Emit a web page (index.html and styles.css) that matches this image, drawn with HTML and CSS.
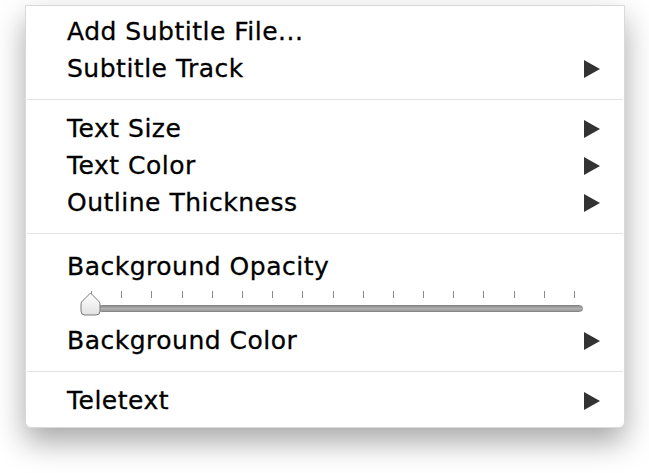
FILE: index.html
```html
<!DOCTYPE html>
<html lang="en">
<head>
    <meta charset="UTF-8">
    <title>Subtitles Menu</title>
    <link rel="stylesheet" href="styles.css">
</head>
<body>

    <div class="menu">
        <div class="menu-item">Add Subtitle File...</div>
        <div class="menu-item">Subtitle Track
            <svg class="arrow" width="16" height="18" viewBox="0 0 16 18"><polygon points="0,0 16,9 0,18" /></svg>
        </div>

        <div class="separator"></div>

        <div class="menu-item">Text Size
            <svg class="arrow" width="16" height="18" viewBox="0 0 16 18"><polygon points="0,0 16,9 0,18" /></svg>
        </div>
        <div class="menu-item">Text Color
            <svg class="arrow" width="16" height="18" viewBox="0 0 16 18"><polygon points="0,0 16,9 0,18" /></svg>
        </div>
        <div class="menu-item">Outline Thickness
            <svg class="arrow" width="16" height="18" viewBox="0 0 16 18"><polygon points="0,0 16,9 0,18" /></svg>
        </div>

        <div class="separator"></div>

        <div class="menu-item opacity-label">Background Opacity</div>
        <div class="slider">
            <div class="ticks" id="ticks"></div>
            <div class="track"></div>
            <svg class="thumb" width="21" height="24" viewBox="0 0 21 24">
                <defs>
                    <linearGradient id="thumb-fill" x1="0" y1="0" x2="0" y2="1">
                        <stop offset="0" stop-color="#ffffff" />
                        <stop offset="1" stop-color="#e2e2e2" />
                    </linearGradient>
                </defs>
                <path d="M10.5 1 L19.5 10 Q20 11 20 13 L20 19 Q20 23 16 23 L5 23 Q1 23 1 19 L1 13 Q1 11 1.5 10 Z"
                      fill="url(#thumb-fill)" stroke="#7a7a7a" stroke-width="1" />
            </svg>
        </div>
        <div class="menu-item">Background Color
            <svg class="arrow" width="16" height="18" viewBox="0 0 16 18"><polygon points="0,0 16,9 0,18" /></svg>
        </div>

        <div class="separator"></div>

        <div class="menu-item">Teletext
            <svg class="arrow" width="16" height="18" viewBox="0 0 16 18"><polygon points="0,0 16,9 0,18" /></svg>
        </div>
    </div>

    <script>
        // slider tick marks
        const ticks = document.getElementById('ticks');
        for (let i = 0; i < 17; i++) {
            const tick = document.createElement('span');
            tick.className = 'tick';
            ticks.appendChild(tick);
        }
    </script>

</body>
</html>
```

FILE: styles.css
```css
/* Basic Styles */
body {
    margin: 0;
    min-height: 473px;
    background-color: #fff;
    font-family: "DejaVu Sans", Verdana, sans-serif;
}

.menu {
    width: 600px;
    height: 423px;
    margin: 5px 0 0 25px;
    padding-top: 7px;
    box-sizing: border-box;
    background-color: #fff;
    border: 1px solid #d9d9d9;
    border-radius: 0 0 6px 6px;
    box-shadow: 0 14px 30px rgba(0, 0, 0, 0.35);
}

.menu-item {
    display: flex;
    align-items: center;
    justify-content: space-between;
    height: 37px;
    line-height: 37px;
    padding: 0 24px 0 41px;
    font-size: 25px;
    letter-spacing: 0.5px;
    color: #000;
    -webkit-text-stroke: 0.3px #000;
}

.arrow {
    fill: #333;
}

.opacity-label {
    padding-top: 4px;
}

.separator {
    height: 1px;
    margin: 12px 1px 10px;
    background-color: #e3e3e3;
}

/* Slider */
.slider {
    position: relative;
    height: 37px;
    margin-left: 54px;
    width: 503px;
}

.ticks {
    display: flex;
    justify-content: space-between;
    margin: 0 8px 0 11px;
    padding-top: 6px;
}

.tick {
    width: 1px;
    height: 7px;
    background-color: #8a8a8a;
}

.track {
    margin: 7px 0 0 18px;
    height: 5px;
    border: 1px solid #858585;
    border-radius: 4px;
    background: linear-gradient(#8e8e8e, #b0b0b0 50%, #9a9a9a);
}

.thumb {
    position: absolute;
    left: 0;
    top: 7px;
}
```
